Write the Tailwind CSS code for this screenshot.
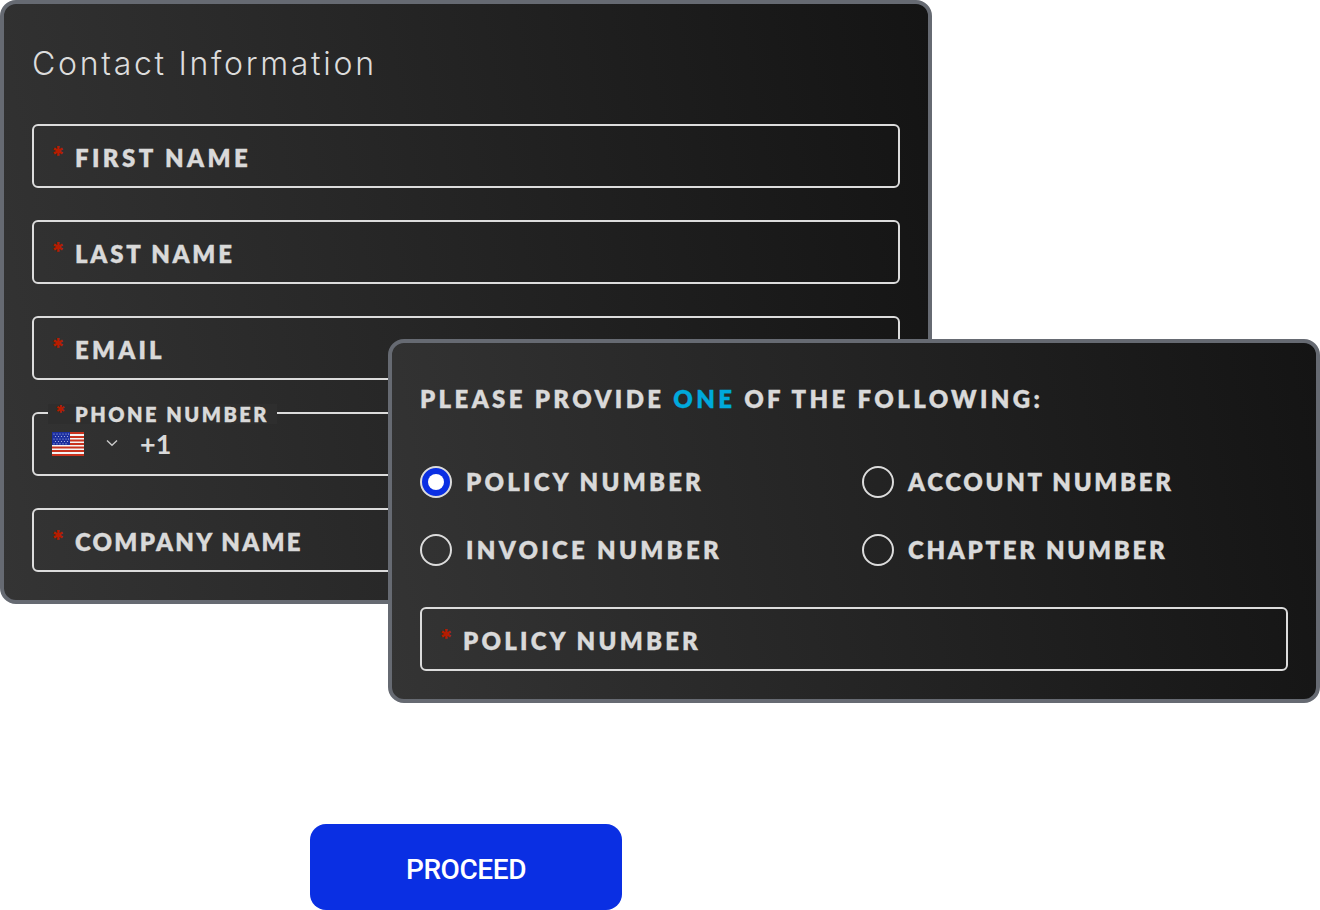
<!DOCTYPE html>
<html lang="en">
<head>
<meta charset="utf-8">
<title>Contact Information</title>
<script src="https://cdn.jsdelivr.net/npm/@tailwindcss/browser@4"></script>
</head>
<body class="bg-white">
<main class="relative w-[1320px] h-[910px] overflow-hidden font-['Lato','Noto_Sans',sans-serif]">
  <section class="w-[932px] h-[604px] border-4 border-[#666a72] rounded-[16px] bg-linear-[80deg] from-[#343434] to-[#141414] px-[28px] pt-[41px]">
    <h2 class="h-[38px] leading-[38px] text-[32px] font-light tracking-[2.7px] text-[#dcdcdc] font-['Inter',sans-serif]">Contact Information</h2>
    <div class="mt-[41px] flex flex-col gap-[32px]">
      <div class="h-[64px] border-2 border-[#dcdcdc] rounded-[6px] flex items-center pl-[17px] pt-[4px]"><span class="text-[#b61c00] text-[24px] font-extrabold w-[24px] -mt-[4px] leading-none font-['Inter',sans-serif]">*</span><span class="text-[24px] font-extrabold tracking-[3.4px] text-[#d9d9d9] [-webkit-text-stroke:0.3px_#d9d9d9]">FIRST NAME</span></div>
      <div class="h-[64px] border-2 border-[#dcdcdc] rounded-[6px] flex items-center pl-[17px] pt-[4px]"><span class="text-[#b61c00] text-[24px] font-extrabold w-[24px] -mt-[4px] leading-none font-['Inter',sans-serif]">*</span><span class="text-[24px] font-extrabold tracking-[2.75px] text-[#d9d9d9] [-webkit-text-stroke:0.3px_#d9d9d9]">LAST NAME</span></div>
      <div class="h-[64px] border-2 border-[#dcdcdc] rounded-[6px] flex items-center pl-[17px] pt-[4px]"><span class="text-[#b61c00] text-[24px] font-extrabold w-[24px] -mt-[4px] leading-none font-['Inter',sans-serif]">*</span><span class="text-[24px] font-extrabold tracking-[3.2px] text-[#d9d9d9] [-webkit-text-stroke:0.3px_#d9d9d9]">EMAIL</span></div>
    </div>
    <div class="relative mt-[32px] h-[64px] border-2 border-[#dcdcdc] rounded-[6px] flex items-center pl-[18px]">
      <div class="absolute left-[14px] -top-[10px] h-[20px] bg-[#2e2e2e] px-[8px] flex items-center"><span class="text-[#b61c00] text-[19px] font-extrabold w-[20px] -mt-[4px] -ml-[1px] leading-none font-['Inter',sans-serif]">*</span><span class="text-[20px] font-extrabold tracking-[2.5px] text-[#d9d9d9] [-webkit-text-stroke:0.3px_#d9d9d9]">PHONE NUMBER</span></div>
      <svg width="32" height="24" viewBox="0 0 32 24" class="shrink-0" aria-hidden="true">
        <rect width="32" height="24" fill="#f4f4f4"/>
        <rect y="0" width="32" height="2" fill="#c8321e"/><rect y="4" width="32" height="2" fill="#c8321e"/><rect y="7.5" width="32" height="2" fill="#c8321e"/><rect y="11" width="32" height="2" fill="#c8321e"/><rect y="14.5" width="32" height="2" fill="#c8321e"/><rect y="18" width="32" height="2" fill="#c8321e"/><rect y="22" width="32" height="2" fill="#c8321e"/>
        <rect width="18" height="13" fill="#1c2f9e"/>
        <g fill="#b9c3e8"><circle cx="2" cy="2" r=".6"/><circle cx="5" cy="2" r=".6"/><circle cx="8" cy="2" r=".6"/><circle cx="11" cy="2" r=".6"/><circle cx="14" cy="2" r=".6"/><circle cx="16.5" cy="2" r=".6"/><circle cx="3.5" cy="4.5" r=".6"/><circle cx="6.5" cy="4.5" r=".6"/><circle cx="9.5" cy="4.5" r=".6"/><circle cx="12.5" cy="4.5" r=".6"/><circle cx="15.5" cy="4.5" r=".6"/><circle cx="2" cy="7" r=".6"/><circle cx="5" cy="7" r=".6"/><circle cx="8" cy="7" r=".6"/><circle cx="11" cy="7" r=".6"/><circle cx="14" cy="7" r=".6"/><circle cx="16.5" cy="7" r=".6"/><circle cx="3.5" cy="9.5" r=".6"/><circle cx="6.5" cy="9.5" r=".6"/><circle cx="9.5" cy="9.5" r=".6"/><circle cx="12.5" cy="9.5" r=".6"/><circle cx="15.5" cy="9.5" r=".6"/><circle cx="2" cy="11.8" r=".6"/><circle cx="5" cy="11.8" r=".6"/><circle cx="8" cy="11.8" r=".6"/><circle cx="11" cy="11.8" r=".6"/><circle cx="14" cy="11.8" r=".6"/></g>
      </svg>
      <svg width="12" height="8" viewBox="0 0 12 8" fill="none" stroke="#c9c9c9" stroke-width="1.4" class="ml-[22px] -mt-[3px] shrink-0" aria-hidden="true"><path d="M1 1.5 6 6.2 11 1.5"/></svg>
      <span class="ml-[22px] -mt-[2px] text-[27px] font-bold text-[#d9d9d9] leading-none">+1</span>
    </div>
    <div class="mt-[32px] h-[64px] border-2 border-[#dcdcdc] rounded-[6px] flex items-center pl-[17px] pt-[4px]"><span class="text-[#b61c00] text-[24px] font-extrabold w-[24px] -mt-[4px] leading-none font-['Inter',sans-serif]">*</span><span class="text-[24px] font-extrabold tracking-[2.25px] text-[#d9d9d9] [-webkit-text-stroke:0.3px_#d9d9d9]">COMPANY NAME</span></div>
  </section>

  <section class="absolute left-[388px] top-[339px] w-[932px] h-[364px] border-4 border-[#666a72] rounded-[16px] bg-linear-[80deg] from-[#343434] to-[#141414] px-[28px] pt-[41px]">
    <p class="h-[30px] leading-[30px] text-[24px] font-extrabold tracking-[3.35px] text-[#d9d9d9] [-webkit-text-stroke:0.3px_#d9d9d9]">PLEASE PROVIDE <span class="text-[#00a9dc] [-webkit-text-stroke:0.3px_#00a9dc]">ONE</span> OF THE FOLLOWING:</p>
    <div class="mt-[52px] grid grid-cols-[442px_1fr] gap-y-[36px]">
      <label class="flex items-center gap-[14px] h-[32px]"><span class="w-[32px] h-[32px] rounded-full border-2 border-[#dcdcdc] bg-[#0a2fe3] flex items-center justify-center"><span class="w-[16px] h-[16px] rounded-full bg-white"></span></span><span class="text-[24px] font-extrabold tracking-[3.2px] text-[#d9d9d9] [-webkit-text-stroke:0.3px_#d9d9d9]">POLICY NUMBER</span></label>
      <label class="flex items-center gap-[14px] h-[32px]"><span class="w-[32px] h-[32px] rounded-full border-2 border-[#dcdcdc]"></span><span class="text-[24px] font-extrabold tracking-[2.7px] text-[#d9d9d9] [-webkit-text-stroke:0.3px_#d9d9d9]">ACCOUNT NUMBER</span></label>
      <label class="flex items-center gap-[14px] h-[32px]"><span class="w-[32px] h-[32px] rounded-full border-2 border-[#dcdcdc]"></span><span class="text-[24px] font-extrabold tracking-[3.3px] text-[#d9d9d9] [-webkit-text-stroke:0.3px_#d9d9d9]">INVOICE NUMBER</span></label>
      <label class="flex items-center gap-[14px] h-[32px]"><span class="w-[32px] h-[32px] rounded-full border-2 border-[#dcdcdc]"></span><span class="text-[24px] font-extrabold tracking-[2.7px] text-[#d9d9d9] [-webkit-text-stroke:0.3px_#d9d9d9]">CHAPTER NUMBER</span></label>
    </div>
    <div class="mt-[41px] h-[64px] border-2 border-[#dcdcdc] rounded-[6px] flex items-center pl-[17px] pt-[4px]"><span class="text-[#b61c00] text-[24px] font-extrabold w-[24px] -mt-[4px] leading-none font-['Inter',sans-serif]">*</span><span class="text-[24px] font-extrabold tracking-[3.2px] text-[#d9d9d9] [-webkit-text-stroke:0.3px_#d9d9d9]">POLICY NUMBER</span></div>
  </section>

  <button class="block mt-[220px] ml-[310px] w-[312px] h-[86px] rounded-[16px] bg-[#0a2fe3] text-white text-[28px] tracking-[-0.4px] pt-[5px] font-medium font-['Roboto',sans-serif]">PROCEED</button>
</main>
</body>
</html>
